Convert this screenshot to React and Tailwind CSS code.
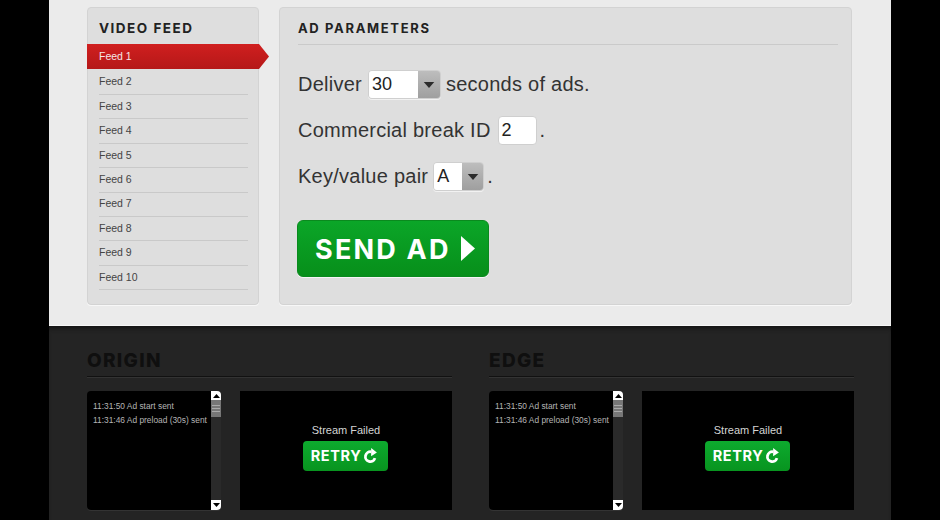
import React from 'react'

const feeds = ['Feed 1', 'Feed 2', 'Feed 3', 'Feed 4', 'Feed 5', 'Feed 6', 'Feed 7', 'Feed 8', 'Feed 9', 'Feed 10']

function Caret({ className }) {
    return (
        <svg viewBox="0 0 14 8" className={className}>
            <path d="M0 0H14L7 8Z" fill="currentColor" />
        </svg>
    )
}

function Select({ value, textWidth, arrowWidth }) {
    return (
        <span className="inline-flex h-[29px] overflow-hidden rounded-[4px] border border-[#cfcfcf] shadow-[0_1px_0_#f2f2f2]">
            <span className={`${textWidth} bg-white pl-[3px] text-[18px] leading-[27px] tracking-normal text-[#222]`}>{value}</span>
            <span className={`${arrowWidth} flex items-center justify-center bg-gradient-to-b from-[#bdbdbd] to-[#9f9f9f]`}>
                <Caret className="h-[6px] w-[12px] text-[#2b2b2b]" />
            </span>
        </span>
    )
}

function Stream({ title }) {
    return (
        <section className="w-[365px]">
            <h2 className="h-[29px] border-b border-[#111] font-['Inter',sans-serif] text-[19px] leading-[25px] font-extrabold tracking-[1.3px] text-[#0f0f0f] shadow-[0_1px_0_#333]">
                {title}
            </h2>
            <div className="mt-[14px] flex gap-[19px]">
                <div className="flex h-[119px] w-[134px] overflow-hidden rounded-[4px] bg-black shadow-[0_1px_0_#333]">
                    <div className="flex-1 pt-[8px] pl-[6px] font-['Liberation_Sans',sans-serif] text-[8.4px] leading-[14px] whitespace-nowrap text-[#b5b5b5]">
                        <p>11:31:50 Ad start sent</p>
                        <p>11:31:46 Ad preload (30s) sent</p>
                    </div>
                    <div className="flex w-[10px] flex-col bg-[#2a2a2a]">
                        <div className="flex h-[9px] items-center justify-center bg-white">
                            <Caret className="h-[4px] w-[7px] rotate-180 text-black" />
                        </div>
                        <div className="flex h-[17px] flex-col justify-center gap-[2px] bg-[#777] px-[1px]">
                            <div className="h-px bg-[#aaa]" />
                            <div className="h-px bg-[#aaa]" />
                            <div className="h-px bg-[#aaa]" />
                        </div>
                        <div className="flex-1" />
                        <div className="flex h-[10px] items-center justify-center bg-white">
                            <Caret className="h-[4px] w-[7px] text-black" />
                        </div>
                    </div>
                </div>
                <div className="flex h-[119px] w-[212px] flex-col items-center bg-black pt-[33px]">
                    <p className="font-['Liberation_Sans',sans-serif] text-[11px] leading-[13px] text-[#d4d4d4]">Stream Failed</p>
                    <button className="mt-[4px] mr-[2px] flex h-[30px] w-[85px] items-center justify-center gap-[1px] rounded-[4px] bg-gradient-to-b from-[#0dab2e] to-[#08941f] font-['Inter',sans-serif] text-[14.5px] font-bold tracking-[0.6px] text-white">
                        RETRY
                        <svg viewBox="0 0 16 16" className="h-[17px] w-[17px]">
                            <path d="M12.2 9.5A4.6 4.6 0 1 1 8.6 3.6" fill="none" stroke="white" strokeWidth="2.6" />
                            <path d="M8.6 0L14 4.2L8.6 7.8Z" fill="white" />
                        </svg>
                    </button>
                </div>
            </div>
        </section>
    )
}

export default function App() {
    return (
        <div className="flex h-[520px] w-[940px] justify-center overflow-hidden bg-black font-['Liberation_Sans',sans-serif]">
            <div className="w-[842px]">
                {/* Top controls */}
                <div className="flex h-[326px] gap-[20px] border-b border-[#f7f7f7] bg-[#ebebeb] pt-[7px] pl-[38px]">
                    <aside className="h-[298px] w-[172px] rounded-[4px] border border-[#d3d3d3] bg-[#dedede] shadow-[0_1px_0_#f7f7f7]">
                        <h2 className="h-[36px] pt-[12px] pl-[11px] font-['Inter',sans-serif] text-[13.5px] leading-[17px] font-bold tracking-[1.5px] text-[#222]">
                            VIDEO FEED
                        </h2>
                        <ul className="-ml-px">
                            {feeds.map((feed, i) => (
                                <li key={feed} className={i === 0 ? 'h-[26.4px]' : 'h-[24.44px]'}>
                                    {i === 0 ? (
                                        <div className="flex h-[25px] w-[182px] items-center bg-gradient-to-b from-[#d01f1f] to-[#b51818] pt-[1px] pl-[12px] text-[10.5px] text-[#f5e6e6] [clip-path:polygon(0_0,172px_0,100%_50%,172px_100%,0_100%)]">
                                            {feed}
                                        </div>
                                    ) : (
                                        <div className="mr-[10px] ml-[12px] flex h-[24.44px] items-center border-b border-[#c9c9c9] text-[10.5px] text-[#444]">
                                            {feed}
                                        </div>
                                    )}
                                </li>
                            ))}
                        </ul>
                    </aside>

                    <main className="h-[298px] w-[573px] rounded-[4px] border border-[#d3d3d3] bg-[#dedede] pr-[13px] pl-[18px] shadow-[0_1px_0_#f7f7f7]">
                        <h2 className="h-[37px] border-b border-[#cacaca] pt-[12px] font-['Inter',sans-serif] text-[13px] leading-[17px] font-bold tracking-[1.65px] text-[#222]">
                            AD PARAMETERS
                        </h2>
                        <div className="text-[20px] tracking-[0.25px] text-[#333]">
                            <div className="mt-[24px] flex h-[29px] items-center">
                                <span>Deliver</span>
                                <span className="ml-[6px]">
                                    <Select value="30" textWidth="w-[49px]" arrowWidth="w-[22px]" />
                                </span>
                                <span className="ml-[5px]">seconds of ads.</span>
                            </div>
                            <div className="mt-[17px] flex h-[29px] items-center">
                                <span>Commercial break ID</span>
                                <span className="mt-[2px] ml-[7px] h-[29px] w-[39px] rounded-[4px] border border-[#cfcfcf] bg-white pl-[3px] text-[18px] leading-[27px] tracking-normal text-[#222]">2</span>
                                <span className="ml-[3px]">.</span>
                            </div>
                            <div className="mt-[17px] flex h-[29px] items-center">
                                <span>Key/value pair</span>
                                <span className="ml-[5px]">
                                    <Select value="A" textWidth="w-[28px]" arrowWidth="w-[21px]" />
                                </span>
                                <span className="ml-[3px]">.</span>
                            </div>
                        </div>
                        <button className="mt-[30px] -ml-px flex h-[57px] w-[192px] items-center gap-[10px] rounded-[6px] border border-[#0a8a1e] bg-gradient-to-b from-[#0ba628] to-[#078f1a] pl-[17px] font-['Inter',sans-serif] text-[27px] font-bold tracking-[2.2px] text-white shadow-[0_1px_0_#f5f5f5]">
                            <span className="pt-[3px]">SEND AD</span>
                            <svg viewBox="0 0 14 25" className="h-[25px] w-[14px]">
                                <path d="M0 0L14 12.5L0 25Z" fill="white" />
                            </svg>
                        </button>
                    </main>
                </div>

                {/* Origin / edge streams */}
                <div className="flex h-[194px] gap-[37px] bg-[#242424] pt-[22px] pl-[38px] shadow-[inset_0_5px_5px_-3px_#111]">
                    <Stream title="ORIGIN" />
                    <Stream title="EDGE" />
                </div>
            </div>
        </div>
    )
}
